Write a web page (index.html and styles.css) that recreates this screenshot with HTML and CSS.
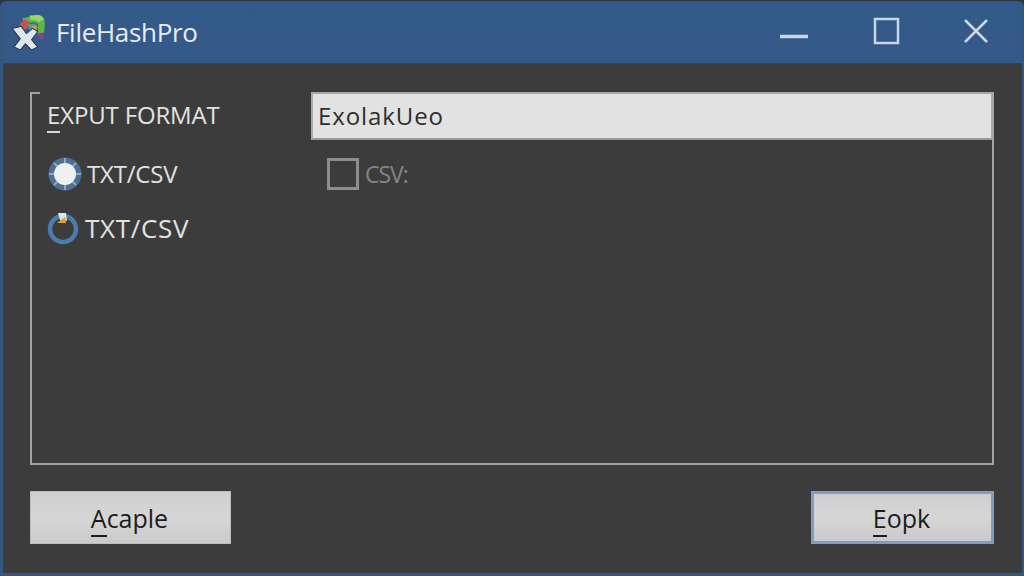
FILE: index.html
```html
<!DOCTYPE html>
<html lang="en">
<head>
<meta charset="utf-8">
<title>FileHashPro</title>
<link rel="stylesheet" href="styles.css">
</head>
<body>
<div class="window">
  <header class="titlebar">
    <svg class="app-icon" viewBox="0 0 36 36" width="37" height="37" aria-hidden="true">
      <path d="M12 5 L27 2 Q34 3 34 10 L33 21 L27 22 L27 11 Q26 9 23 9 L14 10 Z" fill="#5cb54a"/>
      <path d="M19 2.500 L27 2 Q31 2 33 6 L28 9 Q25 6 20 7 Z" fill="#9fd36a"/>
      <path d="M9 11 L15 6 L20 10 L15 17 Z" fill="#c9524a"/>
      <path d="M17 11 L25 10 L26 20 L19 18 Z" fill="#4f9a92"/>
      <path d="M21 13 L26 12 L26 17 L22 17 Z" fill="#d5a24a"/>
      <path d="M27 20 L33 19 L33 25 L29 26 Z" fill="#8b3f8f"/>
      <path d="M2 15 L11 13 L16 20 L22 15 L27 18 L21 26 L27 33 L21 36 L15 30 L10 36 L4 33 L10 25 Z" fill="#dfe6ee" stroke="#26364c" stroke-width="1"/>
    </svg>
    <span class="title">FileHashPro</span>
    <div class="controls">
      <svg class="ctl" viewBox="0 0 30 30" width="30" height="30" aria-hidden="true"><path d="M1 20.500H29" stroke="#c9d6e4" stroke-width="3.500" fill="none"/></svg>
      <svg class="ctl" viewBox="0 0 30 30" width="30" height="30" aria-hidden="true"><rect x="5" y="3" width="23" height="24" stroke="#c9d6e4" stroke-width="2.500" fill="none"/></svg>
      <svg class="ctl" viewBox="0 0 30 30" width="30" height="30" aria-hidden="true"><path d="M4 4L26 26M26 4L4 26" stroke="#c9d6e4" stroke-width="2.500" fill="none"/></svg>
    </div>
  </header>
  <main class="content">
    <section class="group">
      <div class="col-left">
        <div class="heading"><span class="ul">E</span>XPUT FORMAT</div>
        <label class="option opt-first">
          <svg class="radio" viewBox="0 0 34 34" width="34" height="34" aria-hidden="true">
            <circle cx="17" cy="17" r="16.500" fill="#4d6f94"/>
            <path d="M17 1V33M1 17H33M6 6L28 28M28 6L6 28" stroke="#8fa9c4" stroke-width="2"/>
            <circle cx="17" cy="17" r="11" fill="#eef0f2"/>
          </svg>
          <span>TXT/CSV</span>
        </label>
        <label class="option opt-second">
          <svg class="radio" viewBox="0 0 34 34" width="34" height="34" aria-hidden="true">
            <circle cx="16" cy="18" r="13" fill="none" stroke="#4a7cb0" stroke-width="4.500"/>
            <path d="M11 2L19 2L20 10L13 9Z" fill="#dfe6ee"/>
            <path d="M10 12L18 6L19 12Z" fill="#e0a030"/>
          </svg>
          <span class="wide">TXT/CSV</span>
        </label>
      </div>
      <div class="col-right">
        <div class="field">ExolakUeo</div>
        <label class="check"><span class="box"></span><span>CSV:</span></label>
      </div>
    </section>
    <footer class="actions">
      <button class="btn" type="button"><span class="ul">A</span>caple</button>
      <button class="btn btn-default" type="button"><span class="ul">E</span>opk</button>
    </footer>
  </main>
</div>
</body>
</html>
```

FILE: styles.css
```css
* { box-sizing: border-box; }
html, body { margin: 0; height: 100%; }
body {
  background: #2c3440;
  padding-top: 1px;
  font-family: "Open Sans", "Noto Sans", sans-serif;
  overflow: hidden;
}
.window {
  height: 575px;
  display: flex;
  flex-direction: column;
  background: #3c3c3c;
  border: solid #35577f;
  border-width: 1px 2px 3px 3px;
  border-radius: 6px 6px 0 0;
  overflow: hidden;
}
.titlebar {
  height: 62px;
  flex: none;
  display: flex;
  align-items: center;
  padding: 0 31px 0 7px;
  background: linear-gradient(#33598a, #355a88);
  border-bottom: 1px solid #2c4563;
}
.app-icon { flex: none; margin-bottom: 2px; }
.title {
  margin-left: 9px;
  color: #e6ecf3;
  font-size: 26px;
  letter-spacing: -0.3px;
  margin-bottom: 1px;
}
.controls { margin-left: auto; margin-bottom: 4px; display: flex; gap: 61px; }
.ctl { display: block; }
.content {
  flex: 1;
  display: flex;
  flex-direction: column;
  padding: 28px 28px 26px 27px;
}
.group {
  position: relative;
  height: 373px;
  display: flex;
  border: 2px solid #a3a3a3;
  border-top: 0;
}
.group::before {
  content: "";
  position: absolute;
  left: -1px;
  top: 0;
  width: 9px;
  height: 2px;
  background: #a3a3a3;
}
.col-left { width: 279px; flex: none; padding: 7px 0 0 15px; }
.heading {
  color: #e2e2e2;
  font-size: 24px;
  font-weight: 500;
  line-height: 32px;
  letter-spacing: -0.15px;
}
.heading .ul { text-decoration: none; border-bottom: 2px solid #d8d8d8; }
.option {
  display: flex;
  align-items: center;
  color: #e2e2e2;
  font-size: 24px;
  line-height: 34px;
  letter-spacing: -0.2px;
  gap: 5px;
  margin-left: 1px;
}
.opt-first { margin-top: 26px; }
.opt-second { margin-top: 20px; gap: 4px; margin-left: 0; }
.wide { font-size: 26px; letter-spacing: 0.7px; }
.radio { flex: none; }
.col-right { flex: 1; min-width: 0; }
.field {
  height: 48px;
  margin-right: -1px;
  background: #e2e2e2;
  border: 2px solid #a8a8a8;
  border-bottom-color: #9a9a9a;
  color: #2e2e2e;
  font-size: 24px;
  line-height: 44px;
  padding-left: 5px;
  letter-spacing: 0.9px;
}
.check {
  display: flex;
  align-items: center;
  gap: 6px;
  margin: 18px 0 0 16px;
  color: #858585;
  font-size: 23px;
  letter-spacing: -1px;
}
.box {
  width: 32px;
  height: 32px;
  flex: none;
  border: 3px solid #8d8d8d;
}
.actions {
  display: flex;
  justify-content: space-between;
  margin-top: 26px;
}
.btn {
  width: 201px;
  height: 53px;
  padding: 0 2px 0 0;
  background: linear-gradient(#cfcfcf, #d6d6d6 50%, #cacaca);
  border: 1px solid #bdbdbd;
  color: #1c1c1c;
  font: inherit;
  font-size: 25px;
  letter-spacing: 0;
}
.btn .ul { text-decoration: none; border-bottom: 2px solid #1c1c1c; }
.btn-default {
  width: 183px;
  border: 3px solid #7f9fbe;
}
```
